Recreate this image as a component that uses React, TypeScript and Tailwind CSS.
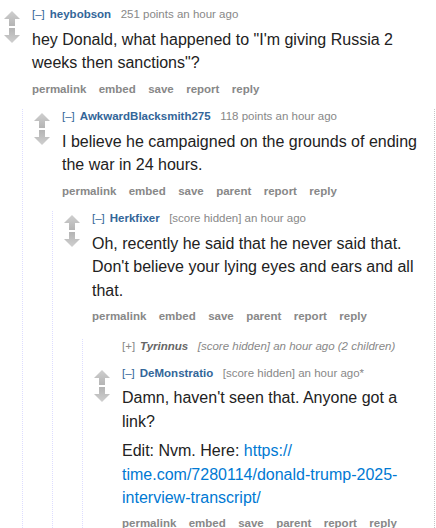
import React from 'react';

type Comment = {
  author: string;
  tagline: string;
  body?: React.ReactNode[];
  buttons?: string[];
  collapsed?: boolean;
  children?: Comment[];
};

const withParent = ['permalink', 'embed', 'save', 'parent', 'report', 'reply'];

const thread: Comment = {
  author: 'heybobson',
  tagline: '251 points an hour ago',
  body: ['hey Donald, what happened to "I\'m giving Russia 2 weeks then sanctions"?'],
  buttons: ['permalink', 'embed', 'save', 'report', 'reply'],
  children: [
    {
      author: 'AwkwardBlacksmith275',
      tagline: '118 points an hour ago',
      body: ['I believe he campaigned on the grounds of ending the war in 24 hours.'],
      buttons: withParent,
      children: [
        {
          author: 'Herkfixer',
          tagline: '[score hidden] an hour ago',
          body: ["Oh, recently he said that he never said that. Don't believe your lying eyes and ears and all that."],
          buttons: withParent,
          children: [
            {
              author: 'Tyrinnus',
              tagline: '[score hidden] an hour ago (2 children)',
              collapsed: true,
            },
            {
              author: 'DeMonstratio',
              tagline: '[score hidden] an hour ago*',
              body: [
                "Damn, haven't seen that. Anyone got a link?",
                <>
                  Edit: Nvm. Here:{' '}
                  <a className="text-[#0079d3]" href="#">
                    https://<wbr />time.com/7280114/donald-trump-2025-interview-transcript/
                  </a>
                </>,
              ],
              buttons: withParent,
            },
          ],
        },
      ],
    },
  ],
};

function Arrow({ down }: { down?: boolean }) {
  return (
    <svg width="16" height="15" viewBox="0 0 16 15" className={down ? 'rotate-180' : ''}>
      <defs>
        <linearGradient id={down ? 'gd' : 'gu'} x1="0" y1="0" x2="0" y2="1">
          <stop offset="0" stopColor="#cfcfcf" />
          <stop offset="1" stopColor="#b4b4b4" />
        </linearGradient>
      </defs>
      <path d="M8 0 L16 8 L11 8 L11 15 L5 15 L5 8 L0 8 Z" fill={`url(#${down ? 'gd' : 'gu'})`} />
    </svg>
  );
}

function CommentView({ c, top }: { c: Comment; top?: boolean }) {
  const margin = top ? 'mt-[6px]' : c.collapsed ? 'mt-[14px]' : 'mt-[11.5px]';
  return (
    <div className={margin}>
      <div className="flex">
        <div className="w-[28px] shrink-0">
          {!c.collapsed && (
            <div className="mt-[4px] flex flex-col gap-[2px]">
              <Arrow />
              <Arrow down />
            </div>
          )}
        </div>
        <div className="min-w-0 flex-1">
          <div className={`text-[11.5px] leading-[15px] text-[#888] ${c.collapsed ? 'italic' : ''}`}>
            <span className={`mr-[5px] not-italic ${c.collapsed ? 'text-[#888]' : 'text-[#369]'}`}>
              {c.collapsed ? '[+]' : '[–]'}
            </span>
            <span className={`mr-[9.5px] font-bold ${c.collapsed ? 'text-[#666]' : 'text-[#369]'}`}>{c.author}</span>
            <span>{c.tagline}</span>
          </div>
          {c.body && (
            <div className="text-[16px] leading-[23.5px] text-[#222]">
              {c.body.map((p, i) => (
                <p key={i} className={i === 0 ? 'my-[5.75px]' : 'mb-[5.75px]'}>
                  {p}
                </p>
              ))}
            </div>
          )}
          {c.buttons && (
            <div className="flex gap-[12.4px] text-[11.5px] font-bold leading-[17px] text-[#888]">
              {c.buttons.map((b) => (
                <span key={b}>{b}</span>
              ))}
            </div>
          )}
        </div>
      </div>
      {c.children && (
        <div
          className={`ml-[18px] border-l border-dotted border-[#ddddff] pl-[11px] ${
            top ? 'border-r border-r-solid border-r-[#c4c4c4]' : ''
          }`}
        >
          {c.children.map((ch) => (
            <CommentView key={ch.author} c={ch} />
          ))}
        </div>
      )}
    </div>
  );
}

export default function App() {
  return (
    <div className="h-[528px] w-[435px] overflow-hidden bg-white pl-[4px] font-['Liberation_Sans',Arial,sans-serif]">
      <div className="pt-px">
        <CommentView c={thread} top />
      </div>
    </div>
  );
}
